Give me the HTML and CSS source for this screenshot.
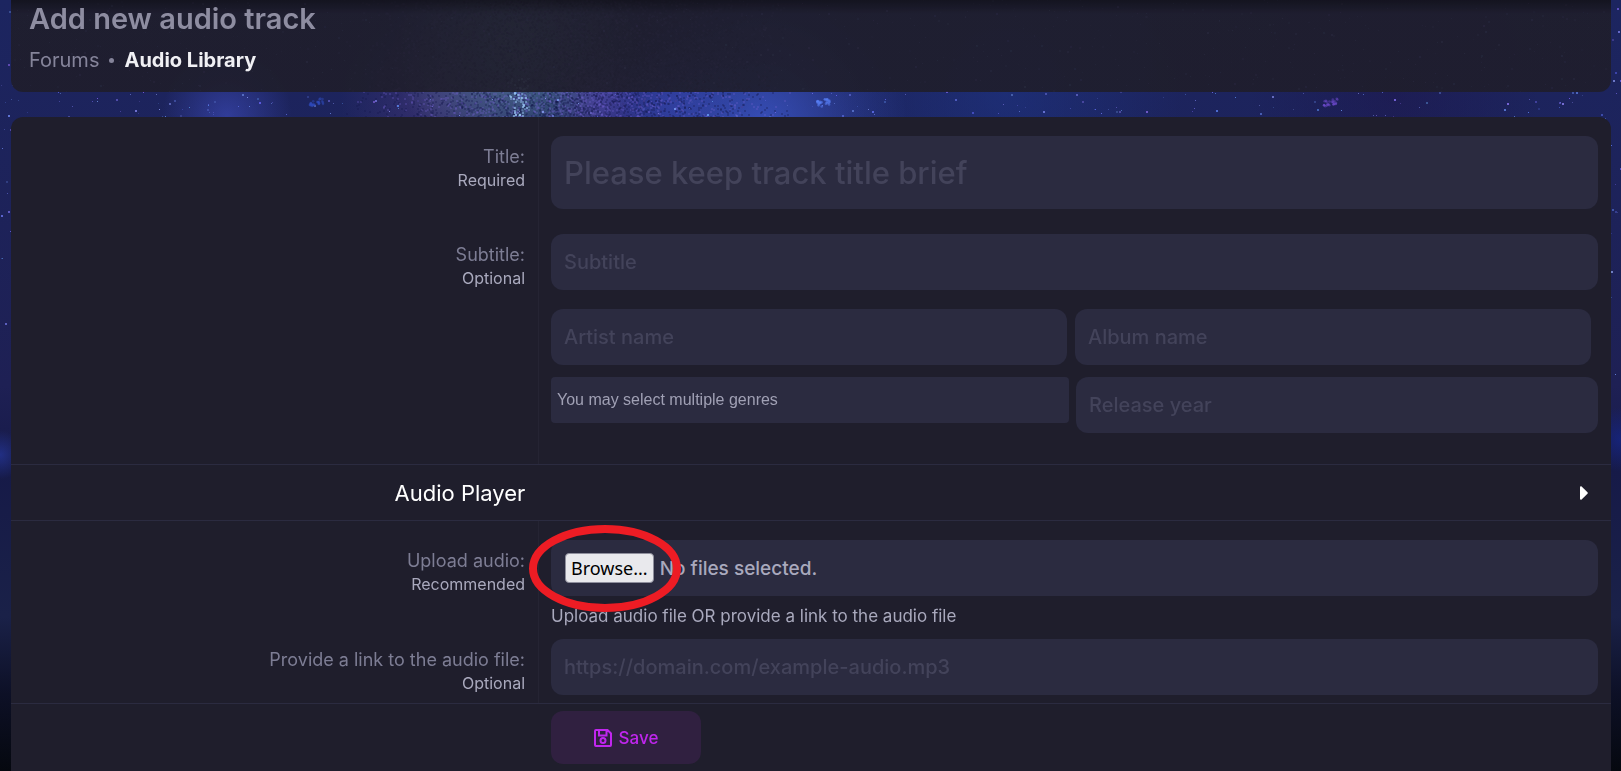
FILE: index.html
```html
<!DOCTYPE html>
<html lang="en">
<head>
    <meta charset="UTF-8">
    <meta name="viewport" content="width=device-width, initial-scale=1.0">
    <title>Add new audio track</title>
    <link rel="stylesheet" href="styles.css">
</head>
<body>
    <canvas id="sky" class="sky" aria-hidden="true"></canvas>

    <div class="page">
        <!-- Page header -->
        <header class="page-header">
            <h1>Add new audio track</h1>
            <nav class="breadcrumbs">
                <a href="#">Forums</a>
                <span class="dot"></span>
                <a href="#" class="current">Audio Library</a>
            </nav>
        </header>

        <!-- Track form -->
        <form class="block">
            <div class="row">
                <div class="row-label">
                    <label for="title">Title:</label>
                    <span class="hint">Required</span>
                </div>
                <div class="row-field">
                    <input type="text" id="title" class="input input-title" placeholder="Please keep track title brief" required>
                </div>
            </div>

            <div class="row row-details">
                <div class="row-label">
                    <label for="subtitle">Subtitle:</label>
                    <span class="hint">Optional</span>
                </div>
                <div class="row-field">
                    <input type="text" id="subtitle" class="input" placeholder="Subtitle">
                    <div class="pair pair-names">
                        <input type="text" class="input" placeholder="Artist name" aria-label="Artist name">
                        <input type="text" class="input" placeholder="Album name" aria-label="Album name">
                    </div>
                    <div class="pair pair-meta">
                        <input type="text" class="genres" placeholder="You may select multiple genres" aria-label="Genres">
                        <input type="text" class="input" placeholder="Release year" aria-label="Release year">
                    </div>
                </div>
            </div>

            <button type="button" class="section-toggle">
                <span class="section-title">Audio Player</span>
                <svg class="caret" viewBox="0 0 8 14" width="8" height="14"><path d="M0 1.2C0 .2 1 0 1.6.5L7.5 6.3c.4.4.4 1 0 1.4L1.6 13.5C1 14 0 13.8 0 12.8z"/></svg>
            </button>

            <div class="row row-upload">
                <div class="row-label">
                    <label for="audio">Upload audio:</label>
                    <span class="hint">Recommended</span>
                </div>
                <div class="row-field">
                    <div class="input file">
                        <input type="file" id="audio" class="file-input" multiple>
                        <span class="file-button">Browse...</span>
                        <span>No files selected.</span>
                        <svg class="marker" viewBox="0 0 152 87" width="152" height="87"><ellipse cx="76" cy="43.5" rx="72" ry="39.5"/></svg>
                    </div>
                    <p class="explain">Upload audio file OR provide a link to the audio file</p>
                </div>
            </div>

            <div class="row row-link">
                <div class="row-label">
                    <label for="link">Provide a link to the audio file:</label>
                    <span class="hint">Optional</span>
                </div>
                <div class="row-field">
                    <input type="url" id="link" class="input" placeholder="https://domain.com/example-audio.mp3">
                </div>
            </div>

            <div class="submit-row">
                <button type="submit" class="save">
                    <svg viewBox="0 0 18 18" width="18" height="18"><path d="M2 1h11.5L17 4.500V16a1 1 0 0 1-1 1H2a1 1 0 0 1-1-1V2a1 1 0 0 1 1-1zM5 1.500V6.500h7.500V1.500"/><circle cx="9" cy="11.500" r="2.500"/></svg>
                    Save
                </button>
            </div>
        </form>
    </div>

    <script src="sky.js"></script>
</body>
</html>
```
FILE: styles.css
```css
* {
    box-sizing: border-box;
}

body {
    margin: 0;
    font-family: Inter, 'Open Sans', sans-serif;
    background-color: #1c2258;
    color: #a9a9bd;
}

/* Night sky behind everything */
.sky {
    position: fixed;
    inset: 0;
    width: 100%;
    height: 100%;
    z-index: -1;
}

.page {
    padding: 0 10px 0 11px;
}

/* Header */
.page-header {
    height: 92px;
    padding: 0 18px;
    background: linear-gradient(rgba(20, 19, 28, 0.95), rgba(31, 30, 44, 0.92) 14px);
    border-radius: 0 0 12px 12px;
}

.page-header h1 {
    margin: 0;
    font-size: 29px;
    line-height: 38px;
    font-weight: 600;
    color: #8e8da1;
}

.breadcrumbs {
    display: flex;
    align-items: center;
    margin-top: 8px;
    font-size: 20px;
    line-height: 28px;
}

.breadcrumbs a {
    color: #85849a;
    text-decoration: none;
}

.breadcrumbs .dot {
    width: 5px;
    height: 5px;
    margin: 0 10px;
    border-radius: 50%;
    background: #85849a;
}

.breadcrumbs .current {
    color: #f0f0f4;
    font-weight: 700;
}

/* Form */
.block {
    margin-top: 25px;
    background: #1f1e2c;
    border-radius: 12px 12px 0 0;
}

.row {
    display: grid;
    grid-template-columns: 33% 1fr;
}

.row-label {
    display: flex;
    flex-direction: column;
    padding: 27px 13px 0 0;
    border-right: 1px solid #252433;
    text-align: right;
}

.row-label label {
    font-size: 18px;
    line-height: 26px;
    color: #7d7d94;
}

.hint {
    font-size: 16px;
    line-height: 20px;
}

.row-field {
    padding: 19px 13px 6px 12px;
}

.row-details .row-field {
    padding-bottom: 31px;
}

.row-upload .row-field {
    padding-bottom: 0;
}

.row-link .row-label {
    padding-top: 18px;
}

.row-link .row-field {
    padding: 10px 13px 8px 12px;
}

.input {
    display: block;
    width: 100%;
    height: 56px;
    padding: 0 13px;
    border: 0;
    border-radius: 12px;
    background: #2b2b40;
    color: #a9a9bd;
    font-family: inherit;
    font-size: 20px;
    font-weight: 500;
}

.input-title {
    height: 73px;
    font-size: 31px;
}

.input::placeholder {
    color: #43435a;
    opacity: 1;
}

.pair {
    display: grid;
    grid-template-columns: 1fr 1fr;
    align-items: start;
}

.pair-names {
    gap: 8px;
    margin-top: 19px;
    padding-right: 7px;
}

.pair-meta {
    grid-template-columns: 518fr 522fr;
    gap: 7px;
    margin-top: 12px;
}

.genres {
    width: 100%;
    height: 46px;
    padding: 0 6px;
    border: 0;
    border-radius: 4px;
    background: #2b2b40;
    font-family: 'Liberation Sans', sans-serif;
    font-size: 16px;
}

.genres::placeholder {
    color: #a0a0b4;
    opacity: 1;
}

/* Collapsible section */
.section-toggle {
    display: flex;
    align-items: center;
    width: 100%;
    height: 57px;
    padding: 0 23px 0 0;
    border: solid #2b2b40;
    border-width: 1px 0;
    background: none;
    color: #fff;
    font-family: inherit;
    font-size: 22px;
}

.section-title {
    width: 33%;
    margin-right: auto;
    padding-right: 6px;
    text-align: right;
}

.caret {
    fill: #fff;
}

/* File upload */
.file {
    position: relative;
    display: flex;
    align-items: center;
    gap: 6px;
    padding-left: 14px;
    font-size: 19px;
}

.file-input {
    position: absolute;
    inset: 0;
    width: 100%;
    opacity: 0;
    cursor: pointer;
}

.file-button {
    padding: 0 5px;
    border: 1px solid #8f8f9d;
    border-radius: 4px;
    background: #e9e9ed;
    color: #000;
    font-family: 'Noto Sans', sans-serif;
    font-size: 18px;
    font-weight: 400;
    line-height: 28px;
}

.marker {
    position: absolute;
    left: -22px;
    top: -15px;
    fill: none;
    stroke: #ed1c24;
    stroke-width: 8;
    pointer-events: none;
}

.explain {
    margin: 7px 0 0;
    font-size: 17px;
    line-height: 26px;
}

/* Submit */
.submit-row {
    padding: 7px 13px 7px calc(33% + 12px);
    border-top: 1px solid #2b2b40;
}

.save {
    display: flex;
    align-items: center;
    justify-content: center;
    gap: 7px;
    width: 150px;
    height: 53px;
    border: 0;
    border-radius: 12px;
    background: #302040;
    color: #c026ee;
    font-family: inherit;
    font-size: 17px;
    font-weight: 500;
    cursor: pointer;
}

.save svg {
    fill: none;
    stroke: #c026ee;
    stroke-width: 2;
}
```
FILE: sky.js
```js
const canvas = document.getElementById('sky');
const ctx = canvas.getContext('2d');

// x, y and radius are fractions of the window width / height / width
const clouds = [
    [0.14, 0.15, 0.04, '65,80,200,0.55'],
    [0.27, 0.13, 0.06, '80,60,130,0.5'],
    [0.32, 0.05, 0.08, '120,180,190,0.6'],
    [0.37, 0.13, 0.03, '100,75,190,0.5'],
    [0.41, 0.13, 0.05, '60,70,190,0.5'],
    [0.47, 0.16, 0.09, '65,95,220,0.7'],
    [0.62, 0.12, 0.11, '30,55,140,0.5'],
    [0.86, 0.12, 0.09, '30,18,70,0.4'],
    [0.00, 0.59, 0.015, '40,60,170,0.6'],
    [1.00, 0.57, 0.02, '20,40,150,0.6']
];

let seed = 7;
function random() {
    seed = (seed * 16807) % 2147483647;
    return seed / 2147483647;
}

// Clump of small soft dots
function twin(x, y, color) {
    ctx.fillStyle = color;
    for (let i = 0; i < 26; i++) {
        const side = i % 2 ? 4 : -4;
        ctx.beginPath();
        ctx.arc(x + side + (random() - 0.5) * 6, y - side / 4 + (random() - 0.5) * 6, 1.3, 0, Math.PI * 2);
        ctx.fill();
    }
}

function draw() {
    const w = canvas.width = window.innerWidth;
    const h = canvas.height = window.innerHeight;
    seed = 7;

    const base = ctx.createLinearGradient(0, 0, 0, h);
    base.addColorStop(0, '#1c2560');
    base.addColorStop(0.5, '#1e2054');
    base.addColorStop(0.61, '#161a48');
    base.addColorStop(0.8, '#1a2148');
    base.addColorStop(0.9, '#0d1026');
    base.addColorStop(1, '#05080f');
    ctx.fillStyle = base;
    ctx.fillRect(0, 0, w, h);

    for (const [x, y, r, color] of clouds) {
        const g = ctx.createRadialGradient(x * w, y * h, 0, x * w, y * h, r * w);
        g.addColorStop(0, `rgba(${color})`);
        g.addColorStop(1, `rgba(${color.replace(/[^,]+$/, '0')})`);
        ctx.fillStyle = g;
        ctx.fillRect(0, 0, w, h);
    }

    // Dust over the bright part of the nebula
    for (let i = 0; i < 9000; i++) {
        const spread = (random() + random() - 1) * 0.14;
        ctx.fillStyle = random() < 0.6 ? 'rgba(20,22,75,0.3)' : 'rgba(120,100,215,0.25)';
        ctx.fillRect(w * (0.35 + spread) | 0, random() * h * 0.2 | 0, 2, 2);
    }

    // Loose stars, upper part only
    for (let i = 0; i < 2600; i++) {
        const size = random() < 0.35 ? 2 : 1;
        ctx.fillStyle = `rgba(${90 + random() * 60 | 0},${100 + random() * 70 | 0},245,${0.2 + random() * 0.6})`;
        ctx.fillRect(random() * w | 0, random() * h * 0.5 | 0, size, size);
    }

    // Bright cluster
    for (let i = 0; i < 80; i++) {
        const dx = (random() + random() - 1) * 12;
        ctx.fillStyle = `rgba(150,195,240,${0.2 + random() * 0.6})`;
        ctx.fillRect(w * 0.32 + dx | 0, h * 0.13 + (random() - 0.5) * 44 | 0, 2, 2);
    }

    twin(w * 0.195, h * 0.133, 'rgba(50,80,200,0.4)');
    twin(w * 0.508, h * 0.133, 'rgba(90,130,250,0.5)');
    twin(w * 0.821, h * 0.133, 'rgba(120,80,220,0.4)');
}

draw();
window.addEventListener('resize', draw);
```
